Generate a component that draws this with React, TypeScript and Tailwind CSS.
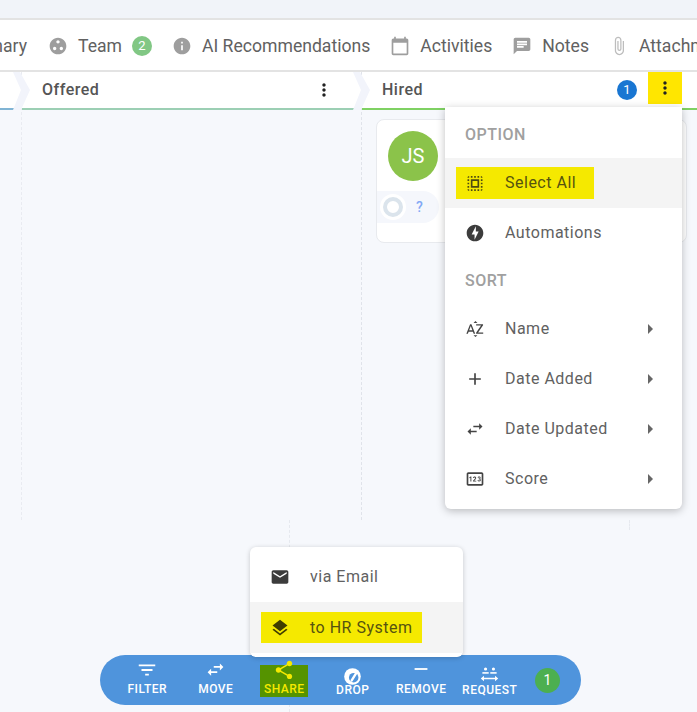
import { MdAdd, MdArrowRight, MdAttachFile, MdCalendarToday, MdChat, MdEmail, MdFilterList, MdInfo, MdLayers, MdMoreVert, MdOfflineBolt, MdOutlinePin, MdRemove, MdSelectAll, MdShare, MdSortByAlpha, MdSwapHoriz } from "react-icons/md";

const TeamIcon = () => (
  <svg viewBox="0 0 24 24" className="h-[20px] w-[20px]" fill="currentColor">
    <path d="M12 2C6.48 2 2 6.48 2 12s4.48 10 10 10 10-4.48 10-10S17.52 2 12 2zM8 17c-1.1 0-2-.9-2-2s.9-2 2-2 2 .9 2 2-.9 2-2 2zm4-8c-1.1 0-2-.9-2-2s.9-2 2-2 2 .9 2 2-.9 2-2 2zm4 8c-1.1 0-2-.9-2-2s.9-2 2-2 2 .9 2 2-.9 2-2 2z" />
  </svg>
);

const DropIcon = () => (
  <svg viewBox="0 0 24 24" className="h-[19px] w-[19px]">
    <circle cx="12" cy="12" r="10.500" fill="currentColor" />
    <circle cx="13.500" cy="13.500" r="6" fill="#4f94dc" />
    <path d="M11 17l5.500-9" stroke="currentColor" strokeWidth="3" strokeLinecap="round" />
  </svg>
);

const RequestIcon = () => (
  <svg viewBox="0 0 24 24" className="h-[19px] w-[19px]" fill="currentColor">
    <circle cx="7" cy="5" r="2" />
    <circle cx="17" cy="5" r="2" />
    <rect x="3" y="9" width="8" height="2" />
    <rect x="13" y="9" width="8" height="2" />
    <path d="M1 17l4-3.500V16h14v-2.500l4 3.500-4 3.500V18H5v2.500z" />
  </svg>
);

const Chevron = () => (
  <svg viewBox="0 0 18 38" className="absolute -left-[9px] top-0 h-[38px] w-[18px]" fill="#f2f4fb">
    <path d="M0 0h7l10 18-9 20H0l8-20z" />
  </svg>
);

const tabs = [
  { icon: <TeamIcon />, label: "Team", badge: "2", color: "text-[#9e9e9e]" },
  { icon: <MdInfo />, label: "AI Recommendations", color: "text-[#9e9e9e]" },
  { icon: <MdCalendarToday />, label: "Activities", color: "text-[#9e9e9e]" },
  { icon: <MdChat />, label: "Notes", color: "text-[#9e9e9e]" },
  { icon: <MdAttachFile />, label: "Attachments", color: "text-[#bdbdbd]" },
];

const sortItems = [
  { icon: <MdSortByAlpha className="text-[20px]" />, label: "Name" },
  { icon: <MdAdd className="text-[24px]" />, label: "Date Added" },
  { icon: <MdSwapHoriz className="text-[20px]" />, label: "Date Updated" },
  { icon: <MdOutlinePin className="text-[20px]" />, label: "Score" },
];

const actions = [
  { icon: <MdFilterList className="h-[22px] w-[22px]" />, label: "FILTER", iconPad: "pt-[4px]", pad: "pb-[9px]" },
  { icon: <MdSwapHoriz className="h-[21px] w-[21px]" />, label: "MOVE", iconPad: "pt-[4px]", pad: "pb-[9px]" },
  { icon: <MdShare className="h-[22px] w-[22px]" />, label: "SHARE", iconPad: "pt-[4px]", pad: "pb-[9px]", active: true },
  { icon: <DropIcon />, label: "DROP", iconPad: "pt-[11px]", pad: "pb-[8px]" },
  { icon: <MdRemove className="h-[22px] w-[22px]" />, label: "REMOVE", iconPad: "pt-[3px]", pad: "pb-[9px]" },
  { icon: <RequestIcon />, label: "REQUEST", iconPad: "pt-[9px]", pad: "pb-[8px]" },
];

const App = () => {
  return (
    <div className="relative flex h-[712px] w-[697px] flex-col overflow-hidden bg-[#f6f8fc] font-['Roboto',sans-serif] text-[#616161]">
      <div className="h-[18px] shrink-0 bg-[#f1f4f9]" />

      {/* tabs */}
      <div className="flex h-[54px] shrink-0 items-center overflow-hidden border-y-2 border-[#e3e3e3] bg-white pl-[48px] pt-[2px] text-[17.600px]">
        <div className="relative flex shrink-0 gap-[20px]">
          <span className="absolute right-full mr-[21px] whitespace-nowrap">Summary</span>
          {tabs.map((t) => (
            <div key={t.label} className="flex shrink-0 items-center">
              <span className={`mr-[10px] text-[20px] ${t.color}`}>{t.icon}</span>
              <span className="whitespace-nowrap">{t.label}</span>
              {t.badge && (
                <span className="ml-[10px] flex h-[20px] w-[20px] items-center justify-center rounded-full bg-[#81c784] text-[13px] text-white">
                  {t.badge}
                </span>
              )}
            </div>
          ))}
        </div>
      </div>

      {/* columns */}
      <div className="flex h-[448px] shrink-0">
        <div className="w-[22px] shrink-0 border-r border-dashed border-[#e9ebf1]">
          <div className="h-[38px] border-b-2 border-[#80b4d4] bg-white" />
        </div>
        <div className="w-[340px] shrink-0 border-r border-dashed border-[#e0e3ea]">
          <div className="relative flex h-[38px] items-center justify-between border-b-2 border-[#9ccfb4] bg-white pb-[1px] pl-[20px] pr-[27px]">
            <Chevron />
            <span className="text-[16px] font-medium tracking-[0.5px] text-[#555]">Offered</span>
            <MdMoreVert className="text-[20px] text-[#222]" />
          </div>
        </div>
        <div className="flex-1">
          <div className="relative flex h-[38px] items-center border-b-2 border-[#7fd163] bg-white pb-[1px] pl-[20px]">
            <Chevron />
            <span className="flex-1 text-[16px] font-medium tracking-[0.5px] text-[#555]">Hired</span>
            <span className="flex h-[20px] w-[20px] items-center justify-center rounded-full bg-[#1976d2] text-[13px] text-white">
              1
            </span>
            <div className="ml-[11px] mr-[15px] flex h-[32px] w-[34px] items-center justify-center self-start bg-[#ffe600]">
              <MdMoreVert className="text-[20px] text-[#222]" />
            </div>
          </div>
          <div className="ml-[14px] mr-[10px] mt-[9px] h-[124px] rounded-lg border border-[#e8eaee] bg-white pl-[11px] pt-[11px]">
            <div className="flex h-[50px] w-[50px] items-center justify-center rounded-full bg-[#8bc34a] text-[20px] text-white">
              JS
            </div>
            <div className="-ml-[11px] mt-[10px] flex h-[32px] w-[62px] items-center rounded-r-full bg-[#f5f7fc] pl-[3px]">
              <div className="flex h-[26px] w-[26px] items-center justify-center rounded-full bg-white">
                <div className="h-[20px] w-[20px] rounded-full border-[4px] border-[#dbe4ec]" />
              </div>
              <span className="ml-[10px] text-[14px] font-medium text-[#82a8f5]">?</span>
            </div>
          </div>
        </div>
      </div>

      {/* second board row, only its dashed lines show */}
      <div className="ml-[289px] flex w-[341px] flex-1 justify-end border-l border-dashed border-[#e6e9ef]">
        <div className="h-[10px] border-r border-dashed border-[#e6e9ef]" />
      </div>

      {/* option menu */}
      <div className="absolute left-[445px] top-[107px] w-[237px] rounded-b-md bg-white pb-[5px] pt-[9px] text-[16px] tracking-[0.5px] shadow-[0_2px_8px_rgba(0,0,0,0.25)]">
        <div className="mb-[4px] flex h-[38px] items-center px-[20px] font-medium text-[#a0a0a0]">OPTION</div>
        <div className="flex h-[50px] items-center bg-[#f4f4f4] px-[11px]">
          <div className="flex h-[32px] w-[138px] items-center bg-[#f5e900] pl-[9px]">
            <span className="flex w-[20px] justify-center text-[#4d4a10]">
              <MdSelectAll className="text-[21px]" />
            </span>
            <span className="ml-[20px] text-[#555310]">Select All</span>
          </div>
        </div>
        <div className="flex h-[50px] items-center px-[20px]">
          <MdOfflineBolt className="text-[20px] text-[#3c3c3c]" />
          <span className="ml-[20px]">Automations</span>
        </div>
        <div className="flex h-[46px] items-center px-[20px] font-medium text-[#a0a0a0]">SORT</div>
        {sortItems.map((s) => (
          <div key={s.label} className="flex h-[50px] items-center pl-[20px] pr-[20px]">
            <span className="flex w-[20px] justify-center text-[#444]">{s.icon}</span>
            <span className="ml-[20px] flex-1">{s.label}</span>
            <MdArrowRight className="text-[24px] text-[#666]" />
          </div>
        ))}
      </div>

      {/* share menu */}
      <div className="absolute left-[250px] top-[547px] z-10 w-[213px] rounded-md bg-white pb-[4px] pt-[5px] text-[16px] tracking-[0.5px] shadow-[0_1px_5px_rgba(0,0,0,0.2)]">
        <div className="flex h-[50px] items-center pl-[20px]">
          <MdEmail className="text-[20px] text-[#3c3c3c]" />
          <span className="ml-[20px]">via Email</span>
        </div>
        <div className="flex h-[51px] items-center bg-[#f4f4f4] pl-[11px]">
          <div className="flex h-[31px] w-[161px] items-center bg-[#f5e900] pl-[9px]">
            <MdLayers className="text-[20px] text-[#3f3c00]" />
            <span className="ml-[20px] text-[#555310]">to HR System</span>
          </div>
        </div>
      </div>

      {/* bulk actions */}
      <div className="absolute left-[100px] top-[655px] flex h-[50px] w-[481px] items-center rounded-full bg-[#4f94dc] pl-[13px] text-white">
        {actions.map((a) => (
          <div
            key={a.label}
            className={`relative flex h-[50px] w-[68.500px] flex-col items-center justify-end text-[12px] font-medium leading-[14px] tracking-[0.5px] ${a.pad} ${a.active ? "text-[#f5e900]" : ""}`}
          >
            {a.active && <div className="absolute left-1/2 top-[10px] h-[32px] w-[48px] -translate-x-1/2 bg-[#559300]" />}
            <div className={`relative flex h-[27px] items-start ${a.iconPad}`}>{a.icon}</div>
            <span className="relative whitespace-nowrap">{a.label}</span>
          </div>
        ))}
        <span className="ml-[11px] flex h-[25px] w-[25px] items-center justify-center rounded-full bg-[#4caf50] text-[14px]">1</span>
      </div>
    </div>
  );
};

export default App;
